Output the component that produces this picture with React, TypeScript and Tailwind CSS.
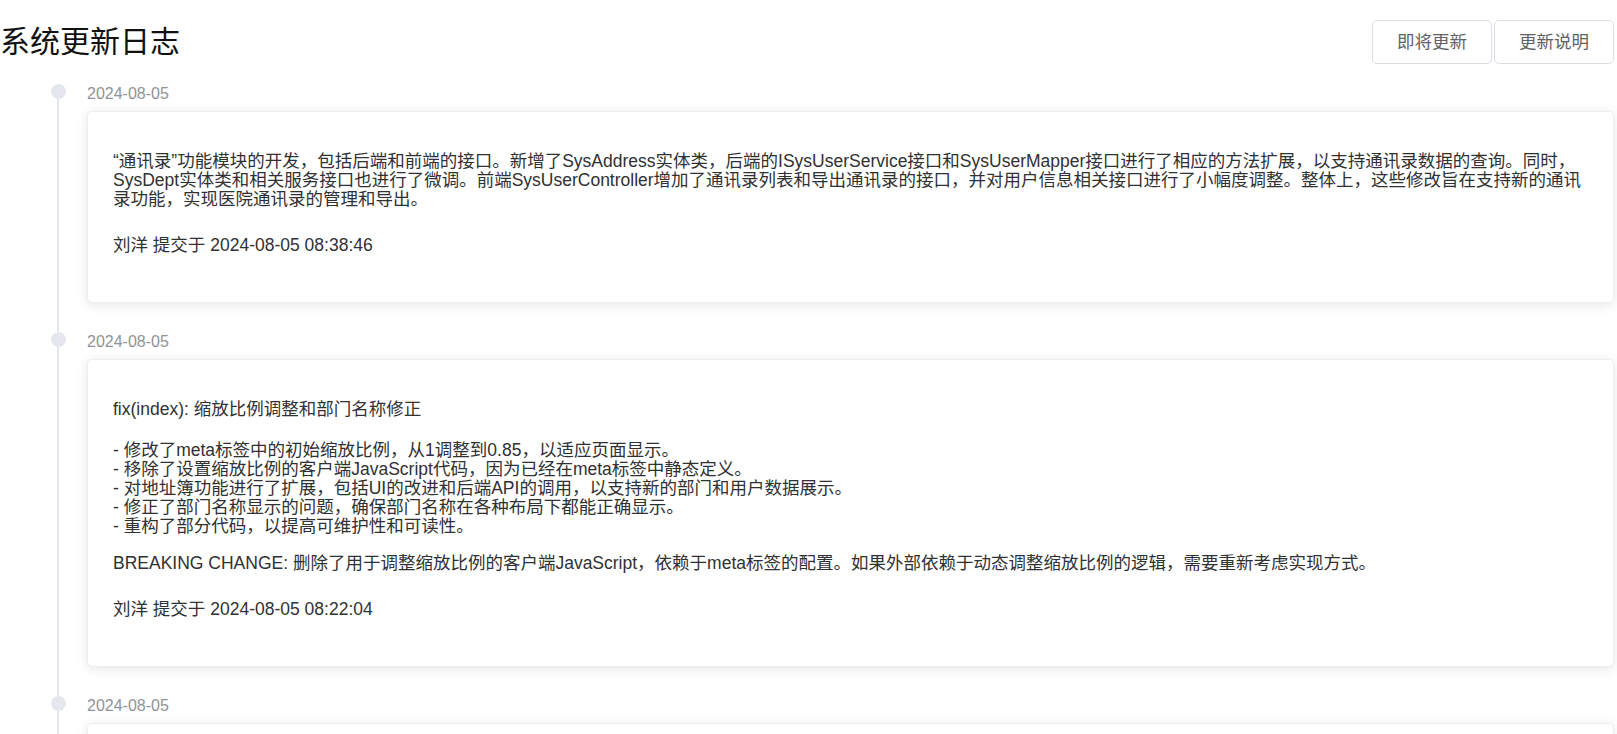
const font = "font-['Liberation_Sans','Noto_Sans_CJK_SC',sans-serif]";

const logs = [
  {
    date: "2024-08-05",
    blocks: [
      [
        "“通讯录”功能模块的开发，包括后端和前端的接口。新增了SysAddress实体类，后端的ISysUserService接口和SysUserMapper接口进行了相应的方法扩展，以支持通讯录数据的查询。同时，SysDept实体类和相关服务接口也进行了微调。前端SysUserController增加了通讯录列表和导出通讯录的接口，并对用户信息相关接口进行了小幅度调整。整体上，这些修改旨在支持新的通讯录功能，实现医院通讯录的管理和导出。",
      ],
    ],
    author: "刘洋 提交于 2024-08-05 08:38:46",
  },
  {
    date: "2024-08-05",
    blocks: [
      ["fix(index): 缩放比例调整和部门名称修正"],
      [
        "- 修改了meta标签中的初始缩放比例，从1调整到0.85，以适应页面显示。",
        "- 移除了设置缩放比例的客户端JavaScript代码，因为已经在meta标签中静态定义。",
        "- 对地址簿功能进行了扩展，包括UI的改进和后端API的调用，以支持新的部门和用户数据展示。",
        "- 修正了部门名称显示的问题，确保部门名称在各种布局下都能正确显示。",
        "- 重构了部分代码，以提高可维护性和可读性。",
      ],
      [
        "BREAKING CHANGE: 删除了用于调整缩放比例的客户端JavaScript，依赖于meta标签的配置。如果外部依赖于动态调整缩放比例的逻辑，需要重新考虑实现方式。",
      ],
    ],
    author: "刘洋 提交于 2024-08-05 08:22:04",
  },
  {
    date: "2024-08-05",
    blocks: [],
    author: "",
  },
];

export default function App() {
  return (
    <div className={`h-screen overflow-hidden bg-white pr-[3px] ${font}`}>
      {/* 标题栏 */}
      <div className="flex items-start justify-between pt-[20px]">
        <h1 className="text-[30px] leading-[44px] font-normal text-[#111]">系统更新日志</h1>
        <div className="flex gap-[2px]">
          <button className="h-[44px] w-[120px] rounded-[5px] border border-[#dcdfe6] bg-white text-[17.5px] text-[#606266]">
            即将更新
          </button>
          <button className="h-[44px] w-[120px] rounded-[5px] border border-[#dcdfe6] bg-white text-[17.5px] text-[#606266]">
            更新说明
          </button>
        </div>
      </div>

      {/* 时间线 */}
      <div className="mt-[20px] pl-[51px]">
        {logs.map((log, i) => (
          <div key={i} className="relative pl-[36px] pb-[29px]">
            <div className="absolute left-[6px] top-0 bottom-0 w-[2px] bg-[#e4e7ed]" />
            <div className="absolute left-0 top-0 h-[15px] w-[15px] rounded-full bg-[#e4e7ed]" />
            <div className="text-[16px] leading-[20px] text-[#909399]">{log.date}</div>
            <div className="mt-[7px] min-h-[120px] rounded-[5px] border border-[#ebeef5] bg-white px-[25px] pt-[40px] pb-[47px] text-[17.5px] leading-[19px] text-[#303133] shadow-[0_2px_12px_0_rgba(0,0,0,0.1)]">
              {log.blocks.map((block, bi) => (
                <div key={bi} className={bi === 0 ? "" : bi === 1 ? "mt-[22px]" : "mt-[18px]"}>
                  {block.map((line, li) => (
                    <div key={li}>{line}</div>
                  ))}
                </div>
              ))}
              {log.author && <div className="mt-[27px]">{log.author}</div>}
            </div>
          </div>
        ))}
      </div>
    </div>
  );
}
